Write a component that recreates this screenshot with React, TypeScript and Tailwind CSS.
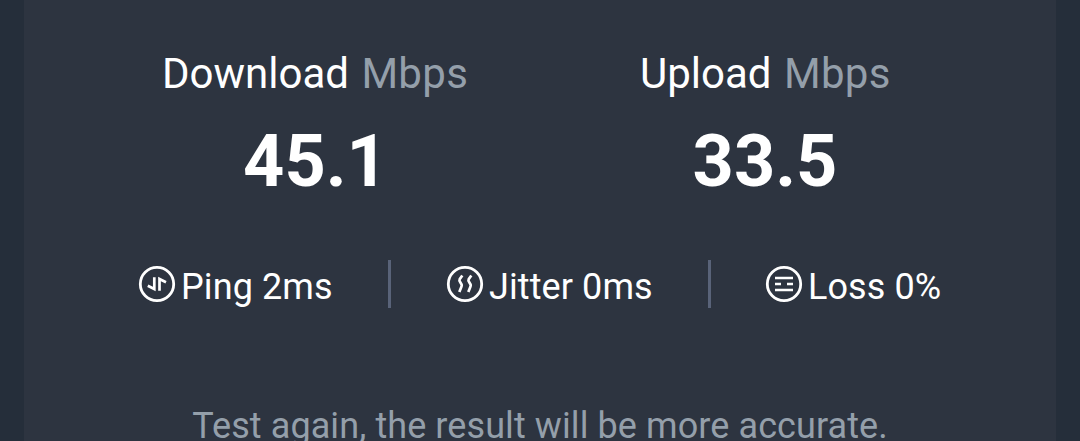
import React from 'react';

function Metric({ label, value, className }: { label: string; value: string; className: string }) {
  return (
    <section className={className}>
      <h2 className="whitespace-nowrap text-[42px] leading-[50px] font-normal">
        {label} <span className="ml-[2px] tracking-[0.3px] text-[#949faa]">Mbps</span>
      </h2>
      <p className="mt-[21px] text-center text-[72px] leading-[84px] font-bold">{value}</p>
    </section>
  );
}

function Ring({ children }: { children: React.ReactNode }) {
  return (
    <svg className="mt-[5px] mr-[5px] h-[38px] w-[38px] shrink-0" viewBox="0 0 38 38" fill="none" stroke="white" strokeWidth="2.7">
      <circle cx="19" cy="19" r="16.7" strokeWidth="2.8" />
      {children}
    </svg>
  );
}

export default function App() {
  return (
    <div className="h-[441px] w-[1080px] overflow-hidden bg-[#252e3a] px-[24px] font-['Roboto',sans-serif] text-white">
      <main className="h-[441px] overflow-hidden bg-[#2d3440]">
        <div className="flex pt-[49px]">
          <Metric label="Download" value="45.1" className="ml-[138px] w-[307px]" />
          <Metric label="Upload" value="33.5" className="ml-[171px] w-[250px]" />
        </div>
        <div className="mt-[56px] flex h-[48px] text-[36px] leading-[54px] tracking-[0.1px] whitespace-nowrap">
          <div className="ml-[114px] flex w-[250px]">
            <Ring><path d="M9.8 20.8L16.3 24V12.3M28 17.2L21.5 14V25.7" /></Ring><span>Ping 2ms</span>
          </div>
          <div className="h-[48px] w-[3px] bg-[#596379]" />
          <div className="ml-[55px] flex w-[262px]">
            <Ring><path d="M16.3 10.5L13.7 14.2Q13.1 15.6 14 16.8L15.6 19.5Q16 20.8 15.3 22L13.3 27M25.3 10.5L22.7 14.2Q22.1 15.6 23 16.8L24.6 19.5Q25 20.8 24.3 22L22.3 27" /></Ring><span>Jitter 0ms</span>
          </div>
          <div className="h-[48px] w-[3px] bg-[#596379]" />
          <div className="ml-[54px] flex">
            <Ring><path d="M10 13h18M10 19h6M22 19h6M10 25h18" /></Ring><span>Loss 0%</span>
          </div>
        </div>
        <p className="mt-[94px] text-center text-[36px] leading-[48px] tracking-[0.09px] whitespace-nowrap text-[#949faa]">Test again, the result will be more accurate.</p>
      </main>
    </div>
  );
}
